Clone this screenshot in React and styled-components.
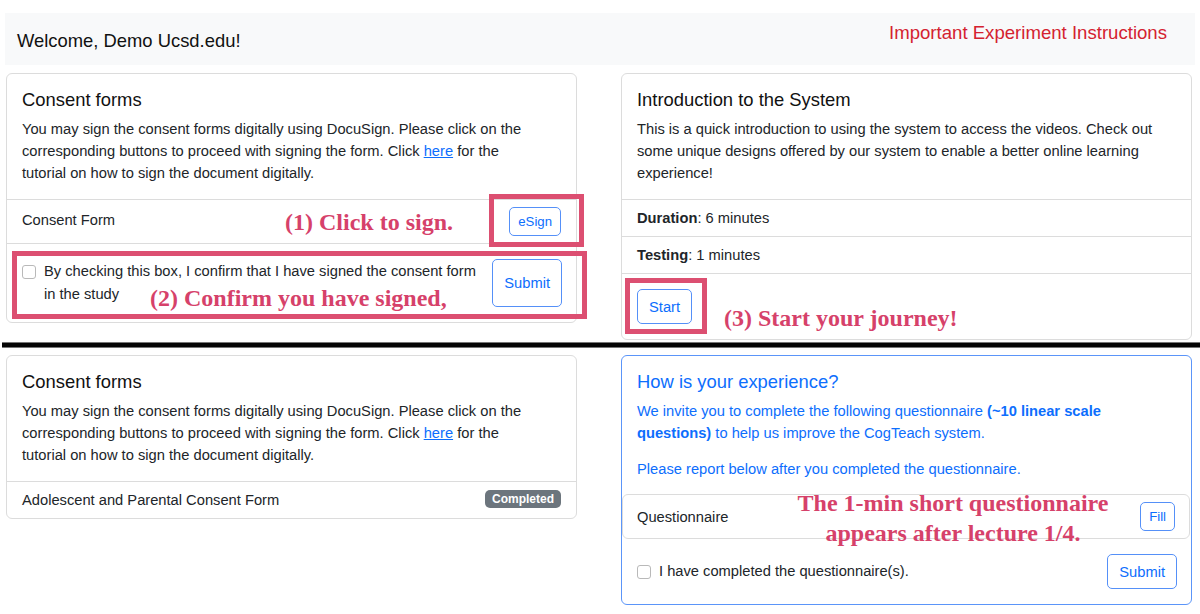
import React from "react";
import styled, { createGlobalStyle } from "styled-components";

const GlobalStyle = createGlobalStyle`
  html, body {
    margin: 0;
    padding: 0;
    background: #ffffff;
  }
  body {
    font-family: "Liberation Sans", Arial, sans-serif;
    color: #212529;
    font-size: 14.7px;
    line-height: 22px;
  }
  * {
    box-sizing: border-box;
  }
`;

const colors = {
  text: "#212529",
  primary: "#0d6efd",
  primaryBorder: "#5590f8",
  border: "#dcdcdc",
  danger: "#d42230",
  note: "#d6416a",
  noteBox: "#dc4f71",
  muted: "#6c757d",
};

export default function App() {
  return (
    <Page>
      <GlobalStyle />
      <Nav>
        <Welcome>Welcome, Demo Ucsd.edu!</Welcome>
        <NavLink href="#">Important Experiment Instructions</NavLink>
      </Nav>

      <Columns top={8}>
        <Card>
          <CardBody>
            <CardTitle>Consent forms</CardTitle>
            <CardText narrow>
              You may sign the consent forms digitally using DocuSign. Please
              click on the corresponding buttons to proceed with signing the
              form. Click <TextLink href="#">here</TextLink> for the tutorial on
              how to sign the document digitally.
            </CardText>
          </CardBody>
          <ListItem>
            <RaisedLabel>Consent Form</RaisedLabel>
            <OutlineButton size="sm">eSign</OutlineButton>
          </ListItem>
          <CheckRow>
            <CheckLabel>
              <Checkbox />
              <span>
                By checking this box, I confirm that I have signed the consent
                form in the study
              </span>
            </CheckLabel>
            <OutlineButton size="tall">Submit</OutlineButton>
          </CheckRow>
        </Card>

        <Card>
          <CardBody>
            <CardTitle>Introduction to the System</CardTitle>
            <CardText>
              This is a quick introduction to using the system to access the
              videos. Check out some unique designs offered by our system to
              enable a better online learning experience!
            </CardText>
          </CardBody>
          <ListItem>
            <span>
              <b>Duration</b>: 6 minutes
            </span>
          </ListItem>
          <ListItem>
            <span>
              <b>Testing</b>: 1 minutes
            </span>
          </ListItem>
          <CardFooter>
            <OutlineButton>Start</OutlineButton>
          </CardFooter>
        </Card>
      </Columns>

      <Divider />

      <Columns>
        <Card>
          <CardBody>
            <CardTitle>Consent forms</CardTitle>
            <CardText narrow>
              You may sign the consent forms digitally using DocuSign. Please
              click on the corresponding buttons to proceed with signing the
              form. Click <TextLink href="#">here</TextLink> for the tutorial on
              how to sign the document digitally.
            </CardText>
          </CardBody>
          <ListItem>
            <span>Adolescent and Parental Consent Form</span>
            <Badge>Completed</Badge>
          </ListItem>
        </Card>

        <Card accent>
          <CardBody flushBottom>
            <CardTitle color={colors.primary}>How is your experience?</CardTitle>
            <CardText color={colors.primary} spaced>
              We invite you to complete the following questionnaire{" "}
              <b>(~10 linear scale questions)</b> to help us improve the
              CogTeach system.
            </CardText>
            <CardText color={colors.primary} spaced>
              Please report below after you completed the questionnaire.
            </CardText>
          </CardBody>
          <BoxedItem>
            <span>Questionnaire</span>
            <OutlineButton size="sm">Fill</OutlineButton>
          </BoxedItem>
          <CheckRow plain>
            <CheckLabel>
              <Checkbox />
              <span>I have completed the questionnaire(s).</span>
            </CheckLabel>
            <OutlineButton>Submit</OutlineButton>
          </CheckRow>
        </Card>
      </Columns>

      {/* annotations drawn over the screenshot */}
      <MarkBox style={{ left: 489, top: 194, width: 95, height: 53 }} />
      <MarkBox style={{ left: 12, top: 251, width: 575, height: 68 }} />
      <MarkBox style={{ left: 625, top: 278, width: 82, height: 56 }} />

      <Note style={{ left: 285, top: 209 }}>(1) Click to sign.</Note>
      <Note style={{ left: 150, top: 285 }}>(2) Confirm you have signed,</Note>
      <Note style={{ left: 724, top: 305 }}>(3) Start your journey!</Note>
      <Note center style={{ left: 773, top: 488, width: 360 }}>
        The 1-min short questionnaire
        <br />
        appears after lecture 1/4.
      </Note>
    </Page>
  );
}

const Page = styled.div`
  position: relative;
  width: 1200px;
  height: 614px;
  overflow: hidden;
  padding-top: 13px;
`;

const Nav = styled.nav`
  display: flex;
  justify-content: space-between;
  align-items: flex-start;
  height: 52px;
  margin: 0 5px;
  padding: 0 28px 0 12px;
  background: #f8f9fa;
`;

const Welcome = styled.span`
  padding-top: 17px;
  font-size: 18.4px;
  line-height: 22px;
  color: #111;
`;

const NavLink = styled.a`
  padding-top: 9px;
  font-size: 18.6px;
  line-height: 22px;
  color: ${colors.danger};
  text-decoration: none;
`;

const Columns = styled.div`
  display: grid;
  grid-template-columns: 571px 571px;
  column-gap: 44px;
  align-items: start;
  margin-top: ${(p) => (p.top ? `${p.top}px` : "0")};
  padding-left: 6px;
`;

const Card = styled.div`
  display: flex;
  flex-direction: column;
  background: #fff;
  border: 1px solid ${(p) => (p.accent ? "#5b95f9" : colors.border)};
  border-radius: 6px;
  overflow: hidden;
`;

const CardBody = styled.div`
  padding: ${(p) => (p.flushBottom ? "15px 15px 0" : "15px")};
`;

const CardTitle = styled.h5`
  margin: 0 0 7px;
  font-size: 18.4px;
  line-height: 22px;
  font-weight: 500;
  color: ${(p) => p.color || "#111"};
`;

const CardText = styled.p`
  max-width: ${(p) => (p.narrow ? "512px" : "none")};
  margin: 0 0 ${(p) => (p.spaced ? "14px" : "0")};
  font-size: 14.7px;
  line-height: 22px;
  color: ${(p) => p.color || colors.text};
`;

const TextLink = styled.a`
  color: ${colors.primary};
  text-decoration: underline;
`;

const ListItem = styled.div`
  display: flex;
  align-items: center;
  justify-content: space-between;
  padding: 7px 15px;
  min-height: 37px;
  border-top: 1px solid ${colors.border};
  font-size: 14.7px;
  line-height: 22px;
`;

const RaisedLabel = styled.span`
  margin-top: -4px;
`;

const BoxedItem = styled(ListItem)`
  border: 1px solid ${colors.border};
  border-radius: 6px;
  margin: 0 1px 0 0;
  padding: 7px 14px;
`;

const CheckRow = styled.div`
  display: flex;
  align-items: center;
  justify-content: space-between;
  gap: 6px;
  padding: 15px 14px 15px 15px;
  border-top: ${(p) => (p.plain ? "none" : `1px solid ${colors.border}`)};
`;

const CheckLabel = styled.label`
  display: flex;
  align-items: center;
  gap: 8px;
  font-size: 14.7px;
  line-height: 23px;
`;

const Checkbox = styled.span`
  flex: none;
  align-self: flex-start;
  margin-top: 5px;
  width: 14px;
  height: 14px;
  border: 1px solid #b9b9b9;
  border-radius: 3px;
  background: #fff;
`;

const buttonSizes = {
  sm: { height: 29, pad: 8, font: 13.2 },
  md: { height: 35, pad: 11, font: 14.7 },
  tall: { height: 48, pad: 11, font: 14.7 },
};

const OutlineButton = styled.button`
  flex: none;
  height: ${(p) => buttonSizes[p.size || "md"].height}px;
  padding: 0 ${(p) => buttonSizes[p.size || "md"].pad}px;
  font-family: inherit;
  font-size: ${(p) => buttonSizes[p.size || "md"].font}px;
  color: ${colors.primary};
  background: #fff;
  border: 1px solid ${colors.primaryBorder};
  border-radius: 5px;
  cursor: pointer;
`;

const CardFooter = styled.div`
  padding: 15px;
  border-top: 1px solid ${colors.border};
`;

const Badge = styled.span`
  display: inline-block;
  margin-top: -3px;
  padding: 2px 7px;
  font-size: 12px;
  line-height: 14px;
  font-weight: 700;
  color: #fff;
  background: ${colors.muted};
  border-radius: 5px;
`;

const Divider = styled.div`
  height: 6px;
  margin: 2px 0 7px 2px;
  background: #050505;
  border-top: 1px solid #777;
  border-bottom: 1px solid #777;
`;

const MarkBox = styled.div`
  position: absolute;
  border: 5px solid ${colors.noteBox};
  pointer-events: none;
`;

const Note = styled.div`
  position: absolute;
  font-family: "Liberation Serif", "Times New Roman", serif;
  font-weight: 700;
  font-size: 24px;
  line-height: ${(p) => (p.center ? "30px" : "26px")};
  color: ${colors.note};
  white-space: nowrap;
  text-align: ${(p) => (p.center ? "center" : "left")};
`;
